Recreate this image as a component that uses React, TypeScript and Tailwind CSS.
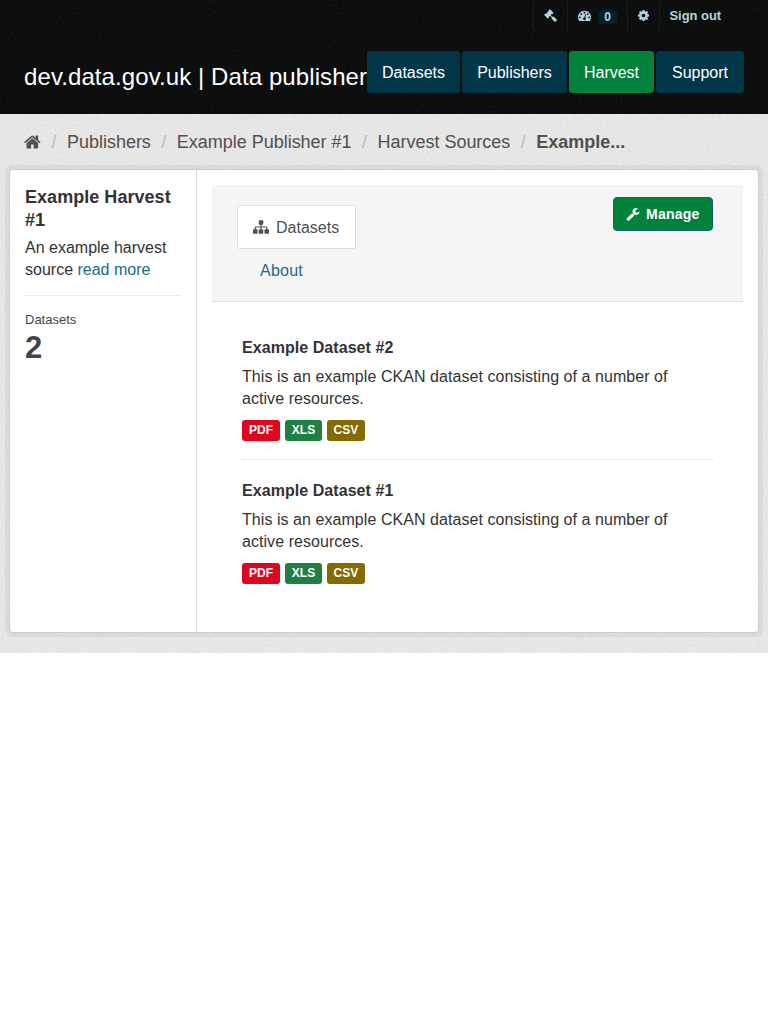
const ICONS = {
  home: "M1408 992v480q0 26-19 45t-45 19h-384v-384h-256v384h-384q-26 0-45-19t-19-45v-480q0-1 .5-3t.5-3l575-474 575 474q1 2 1 6zm223-69l-62 74q-8 9-21 11h-3q-13 0-21-7l-692-577-692 577q-12 8-24 7-13-2-21-11l-62-74q-8-10-7-23.5t11-21.5l719-599q32-26 76-26t76 26l244 204v-195q0-14 9-23t23-9h192q14 0 23 9t9 23v408l219 182q10 8 11 21.5t-7 23.5z",
  sitemap:
    "M1792 1248v320q0 40-28 68t-68 28h-320q-40 0-68-28t-28-68v-320q0-40 28-68t68-28h96v-192h-512v192h96q40 0 68 28t28 68v320q0 40-28 68t-68 28h-320q-40 0-68-28t-28-68v-320q0-40 28-68t68-28h96v-192h-512v192h96q40 0 68 28t28 68v320q0 40-28 68t-68 28h-320q-40 0-68-28t-28-68v-320q0-40 28-68t68-28h96v-192q0-52 38-90t90-38h512v-192h-96q-40 0-68-28t-28-68v-320q0-40 28-68t68-28h320q40 0 68 28t28 68v320q0 40-28 68t-68 28h-96v192h512q52 0 90 38t38 90v192h96q40 0 68 28t28 68z",
  wrench:
    "M448 1472q0-26-19-45t-45-19-45 19-19 45 19 45 45 19 45-19 19-45zm644-420l-682 682q-37 37-90 37-52 0-91-37l-106-108q-38-36-38-90 0-53 38-91l681-681q39 98 114.5 173.5t173.5 114.5zm634-435q0 39-23 106-47 134-164.5 217.5t-258.5 83.5q-185 0-316.5-131.5t-131.5-316.5 131.5-316.5 316.5-131.5q58 0 121.5 16.5t107.5 46.5q16 11 16 28t-16 28l-293 169v224l193 107q5-3 79-48.5t135.5-81 70.5-35.5q15 0 23.5 10t8.5 25z",
  gauge:
    "M384 1152q0-53-37.5-90.5t-90.5-37.5-90.5 37.5-37.5 90.5 37.5 90.5 90.5 37.5 90.5-37.5 37.5-90.5zm192-448q0-53-37.5-90.5t-90.5-37.5-90.5 37.5-37.5 90.5 37.5 90.5 90.5 37.5 90.5-37.5 37.5-90.5zm428 481l101-382q6-26-7.5-48.5t-38.5-29.5-48 6.5-30 39.5l-101 382q-60 5-107 43.5t-63 98.5q-20 77 20 146t117 89 146-20 89-117q16-60-6-117t-72-91zm660-33q0-53-37.5-90.5t-90.5-37.5-90.5 37.5-37.5 90.5 37.5 90.5 90.5 37.5 90.5-37.5 37.5-90.5zm-640-640q0-53-37.5-90.5t-90.5-37.5-90.5 37.5-37.5 90.5 37.5 90.5 90.5 37.5 90.5-37.5 37.5-90.5zm448 192q0-53-37.5-90.5t-90.5-37.5-90.5 37.5-37.5 90.5 37.5 90.5 90.5 37.5 90.5-37.5 37.5-90.5zm320 448q0 261-141 483-19 29-54 29h-1402q-35 0-54-29-141-221-141-483 0-182 71-348t191-286 286-191 348-71 348 71 286 191 191 286 71 348z",
  cog: "M1152 896q0-106-75-181t-181-75-181 75-75 181 75 181 181 75 181-75 75-181zm512-109v222q0 12-8 23t-20 13l-185 28q-19 54-39 91 35 50 107 138 10 12 10 25t-9 23q-27 37-99 108t-94 71q-12 0-26-9l-138-108q-44 23-91 38-16 136-29 186-7 28-36 28h-222q-14 0-24.5-8.5t-11.5-21.5l-28-184q-49-16-90-37l-141 107q-10 9-25 9-14 0-25-11-126-114-165-168-7-10-7-23 0-12 8-23 15-21 51-66.5t54-70.5q-27-50-41-99l-183-27q-13-2-21-12.5t-8-23.5v-222q0-12 8-23t19-13l186-28q14-46 39-92-40-57-107-138-10-12-10-24 0-10 9-23 26-36 98.5-107.5t94.5-71.5q13 0 26 10l138 107q44-23 91-38 16-136 29-186 7-28 36-28h222q14 0 24.5 8.5t11.5 21.5l28 184q49 16 90 37l142-107q9-9 24-9 13 0 25 10 129 119 165 170 7 8 7 22 0 12-8 23-15 21-51 66.5t-54 70.5q26 50 41 98l183 28q13 2 21 12.5t8 23.5z",
  gavel:
    "M1771 1536q0 53-37 90l-107 108q-39 37-91 37-53 0-90-37l-363-364q-38-36-38-90 0-53 43-96l-256-256-126 126q-14 14-34 14t-34-14q2 2 12.5 12t12.5 13 10 11.5 10 13.5 6 13.5 5.5 16.5 1.5 18q0 38-28 68-3 3-16.5 18t-19 20.5-18.5 16.5-22 15.5-22 9-26 4.5q-40 0-68-28l-408-408q-28-28-28-68 0-13 4.5-26t9-22 15.5-22 16.5-18.5 20.5-19 18-16.5q30-28 68-28 10 0 18 1.5t16.5 5.5 13.5 6 13.5 10 11.5 10 13 12.5 12 12.5q-14-14-14-34t14-34l348-348q14-14 34-14t34 14q-2-2-12.5-12t-12.5-13-10-11.5-10-13.5-6-13.5-5.5-16.5-1.5-18q0-38 28-68 3-3 16.5-18t19-20.5 18.5-16.5 22-15.5 22-9 26-4.5q40 0 68 28l408 408q28 28 28 68 0 13-4.5 26t-9 22-15.5 22-16.5 18.5-20.5 19-18 16.5q-30 28-68 28-10 0-18-1.5t-16.5-5.5-13.5-6-13.5-10-11.5-10-13-12.5-12-12.5q14 14 14 34t-14 34l-126 126 256 256q43-43 96-43 52 0 91 37l363 363q37 39 37 91z",
};

function Icon({ name, className }: { name: keyof typeof ICONS; className: string }) {
  return (
    <svg viewBox="0 0 1792 1792" fill="currentColor" className={className} aria-hidden="true">
      <path d={ICONS[name]} />
    </svg>
  );
}

function Grain({ id, className }: { id: string; className: string }) {
  return (
    <svg className={`pointer-events-none absolute inset-0 h-full w-full ${className}`} aria-hidden="true">
      <filter id={id}>
        <feTurbulence type="fractalNoise" baseFrequency="0.6" numOctaves="2" stitchTiles="stitch" />
        <feColorMatrix values="0 0 0 0 1  0 0 0 0 1  0 0 0 0 1  2.5 0 0 0 -0.9" />
      </filter>
      <rect width="100%" height="100%" filter={`url(#${id})`} />
    </svg>
  );
}

const NAV = [
  { label: "Datasets", box: "w-[93px] bg-[#003647]" },
  { label: "Publishers", box: "w-[105px] bg-[#003647]" },
  { label: "Harvest", box: "w-[85px] bg-[#00823b]" },
  { label: "Support", box: "w-[88px] bg-[#003647]" },
];

const FORMATS = [
  { label: "PDF", box: "w-[38px] bg-[#e0051e]" },
  { label: "XLS", box: "w-[37px] bg-[#207f42]" },
  { label: "CSV", box: "w-[38px] bg-[#856a00]" },
];

function Dataset({ title }: { title: string }) {
  return (
    <article>
      <h3 className="text-[16px] leading-[21px] font-bold tracking-[0.06px] text-[#333]">{title}</h3>
      <p className="mt-2 text-[16px] leading-[22px] tracking-[0.055px] text-[#333]">
        This is an example CKAN dataset consisting of a number of
        <br />
        active resources.
      </p>
      <ul className="mt-[10px] flex gap-[5px]">
        {FORMATS.map((f) => (
          <li
            key={f.label}
            className={`flex h-[21px] items-center justify-center rounded-[3px] pb-px text-[12px] font-bold tracking-[0.05px] text-white ${f.box}`}
          >
            {f.label}
          </li>
        ))}
      </ul>
    </article>
  );
}

function Slash() {
  return <span className="w-[26px] text-center text-[#bbb]">/</span>;
}

export default function App() {
  return (
    <div className="min-h-screen w-[768px] bg-white font-['Liberation_Sans',Arial,sans-serif] text-[#333]">
      <header className="relative h-[114px] bg-[#0a0c0c]">
        <Grain id="grain-dark" className="opacity-[0.03]" />
        <div className="relative flex h-[31px] justify-end pr-[37px] text-[#b7d2dc]">
          <a className="flex w-[34px] items-center justify-center border-l border-[#04222b]">
            <Icon name="gavel" className="h-[13px] w-[13px]" />
          </a>
          <a className="flex w-[60px] items-center border-l border-[#04222b] pl-[10px]">
            <Icon name="gauge" className="h-[13px] w-[13px]" />
            <span className="mt-[3px] ml-[7px] flex h-[14px] w-[19px] items-center justify-center rounded bg-[#03212b] text-[12px] font-bold">
              0
            </span>
          </a>
          <a className="flex w-[32px] items-center justify-center border-l border-[#04222b] pr-px">
            <Icon name="cog" className="h-[13px] w-[13px]" />
          </a>
          <a className="flex w-[72px] items-center border-l border-[#04222b] pl-[9.5px] text-[13px] font-bold tracking-[-0.05px] whitespace-nowrap">
            Sign out
          </a>
        </div>
        <div className="relative flex h-[62px] items-end pl-6">
          <div className="mb-0.5 h-[28px] w-[343px] text-[24px] leading-[28px] tracking-[0.09px] whitespace-nowrap text-white">
            dev.data.gov.uk | Data publisher
          </div>
          <nav className="flex gap-0.5">
            {NAV.map((n) => (
              <a
                key={n.label}
                className={`flex h-[42px] items-center justify-center rounded-[3px] pt-px text-[16px] text-white ${n.box}`}
              >
                {n.label}
              </a>
            ))}
          </nav>
        </div>
      </header>

      <div className="relative h-[539px] bg-[#e3e3e3]">
        <Grain id="grain-light" className="opacity-30" />
        <div className="relative flex h-[51px] items-center pt-[5px] pl-6 text-[18px] tracking-[-0.02px] whitespace-nowrap text-[#505050]">
          <Icon name="home" className="-mr-px h-[18px] w-[18px]" />
          <Slash />
          <span>Publishers</span>
          <Slash />
          <span>Example Publisher #1</span>
          <Slash />
          <span>Harvest Sources</span>
          <Slash />
          <span className="font-bold">Example...</span>
        </div>

        <main className="relative mx-[9px] mt-1 flex h-[464px] rounded-[4px] border border-[#ccc] bg-white shadow-[0_0_0_4px_rgba(0,0,0,0.05)]">
          <aside className="w-[187px] border-r border-[#ddd] pt-4 pl-[15px]">
            <h1 className="text-[18px] leading-[23px] font-bold tracking-[0.04px]">
              Example Harvest
              <br />
              #1
            </h1>
            <p className="mt-[5px] text-[16px] leading-[22px] whitespace-nowrap">
              An example harvest
              <br />
              source <a className="text-[#206b82]">read more</a>
            </p>
            <div className="mt-[14px] w-[156px] border-t border-dotted border-[#ddd]" />
            <div className="mt-4 text-[13px] leading-4 text-[#444]">Datasets</div>
            <div className="mt-[3px] text-[31px] leading-[34px] font-bold text-[#444]">2</div>
          </aside>

          <section className="flex-1 px-[15px] pt-[15px]">
            <div className="flex h-[117px] items-start justify-between rounded-t-[3px] border-b border-[#ddd] bg-[#f5f5f5] pr-[30px] pl-[25px]">
              <div className="pt-5">
                <a className="flex h-[44px] w-[119px] items-center rounded-[3px] border border-[#ddd] bg-white pt-px pl-[15px] text-[16px] text-[#505050]">
                  <Icon name="sitemap" className="mr-[7px] mb-px h-4 w-4" />
                  Datasets
                </a>
                <a className="mt-[11px] block pl-[23px] text-[16px] leading-[22px] tracking-[0.25px] text-[#206b82]">
                  About
                </a>
              </div>
              <a className="mt-3 flex h-[34px] w-[100px] items-center rounded-[4px] border border-[#165c7b] bg-[#00823b] pl-3 text-[14px] font-bold tracking-[0.25px] text-white">
                <Icon name="wrench" className="mr-[6px] h-[14px] w-[14px]" />
                Manage
              </a>
            </div>
            <div className="px-[30px] pt-[35px]">
              <Dataset title="Example Dataset #2" />
              <div className="mt-[18px] mb-5 border-t border-dotted border-[#ddd]" />
              <Dataset title="Example Dataset #1" />
            </div>
          </section>
        </main>
      </div>
    </div>
  );
}
